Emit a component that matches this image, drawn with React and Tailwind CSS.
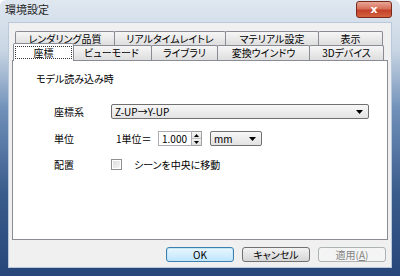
import React from "react";

const topTabs = [
  { label: "レンダリング品質", w: 100 },
  { label: "リアルタイムレイトレ", w: 111 },
  { label: "マテリアル設定", w: 93 },
  { label: "表示", w: 64 },
];

const bottomTabs = [
  { label: "座標", w: 57, selected: true },
  { label: "ビューモード", w: 80 },
  { label: "ライブラリ", w: 66 },
  { label: "変換ウインドウ", w: 92 },
  { label: "3Dデバイス", w: 74 },
];

function Arrow() {
  return (
    <svg width="7" height="4" viewBox="0 0 7 4">
      <path d="M0 0h7L3.5 4z" fill="#000" />
    </svg>
  );
}

function Tab({ label, w, selected, first }) {
  if (selected) {
    return (
      <div
        className="relative z-10 -mt-[2px] -ml-[2px] -mr-[2px] h-[18px] flex bg-white border border-b-0 border-[#898c95] rounded-t-[2px]"
        style={{ width: w + 4 }}
      >
        <span className="flex-1 mx-[1px] mt-[2px] mb-[2px] border border-dotted border-[#333] flex items-center justify-center leading-none">
          {label}
        </span>
      </div>
    );
  }
  return (
    <div
      className={
        first
          ? "h-full flex items-center justify-center border border-b-0 border-[#898c95] bg-gradient-to-b from-[#f6f6f6] to-[#dedede] rounded-t-[2px] leading-none"
          : "h-full -ml-px flex items-center justify-center border border-b-0 border-[#898c95] bg-gradient-to-b from-[#f6f6f6] to-[#dedede] rounded-t-[2px] leading-none"
      }
      style={{ width: w + (first ? 0 : 1) }}
    >
      {label}
    </div>
  );
}

function Select({ value, w }) {
  return (
    <div
      className="h-[15px] flex items-center justify-between pl-[3px] pr-[5px] border border-[#707070] rounded-[2px] bg-gradient-to-b from-[#f7f7f7] to-[#e3e3e3]"
      style={{ width: w }}
    >
      <span className="leading-none">{value}</span>
      <Arrow />
    </div>
  );
}

function Button({ children, primary, disabled }) {
  if (primary) {
    return (
      <div className="w-[68px] h-[15px] flex items-center justify-center rounded-[3px] border border-[#3c7fb1] bg-gradient-to-b from-[#eaf6fd] to-[#bee6fd] shadow-[inset_0_0_0_1px_#c4e5f6] leading-none">
        {children}
      </div>
    );
  }
  if (disabled) {
    return (
      <div className="w-[68px] h-[15px] flex items-center justify-center rounded-[3px] border border-[#adb2b5] bg-[#f4f4f4] text-[#838383] leading-none">
        {children}
      </div>
    );
  }
  return (
    <div className="w-[68px] h-[15px] flex items-center justify-center rounded-[3px] border border-[#707070] bg-gradient-to-b from-[#f2f2f2] to-[#d6d6d6] leading-none">
      {children}
    </div>
  );
}

export default function App() {
  return (
    <div className="w-[400px] h-[276px] flex flex-col rounded-t-[6px] bg-[linear-gradient(180deg,#dfe7f0_0%,#c9d6e4_18%,#6f8fb9_40%,#3a5c8c_70%,#26467a_100%)] font-['Noto_Sans_CJK_JP','Noto_Sans',sans-serif] [font-feature-settings:'palt'] text-[10px] text-black overflow-hidden">
      {/* Title bar */}
      <div className="h-[22px] flex items-start justify-between pl-[5px] pr-[8px] pt-[1px]">
        <span className="mt-[3px] text-[11px] leading-none text-[#1e1e1e]">環境設定</span>
        <div className="w-[36px] h-[17px] flex items-center justify-center rounded-[3px] border border-[#7a2a1d] bg-[linear-gradient(180deg,#e8a796_0%,#d7705a_45%,#c2412a_55%,#d5623f_100%)]">
          <span className="text-white text-[11px] font-bold leading-none [font-family:'DejaVu_Sans',sans-serif]">x</span>
        </div>
      </div>

      {/* Client area */}
      <div className="flex-1 mx-[8px] mb-[8px] flex flex-col bg-[#f0f0f0] border border-[#b9c8da] px-[3px]">
        {/* Tabs */}
        <div className="pt-[8px] pl-[3px]">
          <div className="h-[14px] flex">
            {topTabs.map((t, i) => (
              <Tab key={t.label} label={t.label} w={t.w} first={i === 0} />
            ))}
          </div>
          <div className="h-[15px] flex items-start">
            {bottomTabs.map((t, i) => (
              <Tab key={t.label} label={t.label} w={t.w} selected={t.selected} first={i === 0} />
            ))}
          </div>
        </div>

        {/* Panel */}
        <div className="h-[180px] bg-white border border-[#898c95] pl-[23px] pt-[10px]">
          <div className="h-[14px] flex items-center">モデル読み込み時</div>

          <div className="mt-[19px] pl-[18px] flex flex-col">
            <div className="h-[15px] flex items-center">
              <span className="w-[57px]">座標系</span>
              <Select value="Z-UP→Y-UP" w={258} />
            </div>

            <div className="mt-[12px] h-[15px] flex items-center">
              <span className="w-[62px]">単位</span>
              <span className="w-[42px]">1単位＝</span>
              <div className="w-[34px] h-[15px] flex items-center pl-[3px] border border-[#abadb3] bg-white leading-none">
                1.000
              </div>
              <div className="w-[10px] h-[15px] flex flex-col border border-l-0 border-[#a0a0a0]">
                <div className="flex-1 flex items-center justify-center bg-gradient-to-b from-[#f6f6f6] to-[#e6e6e6] border-b border-[#c0c0c0]">
                  <svg width="5" height="3" viewBox="0 0 5 3">
                    <path d="M2.5 0L5 3H0z" fill="#000" />
                  </svg>
                </div>
                <div className="flex-1 flex items-center justify-center bg-gradient-to-b from-[#f0f0f0] to-[#e0e0e0]">
                  <svg width="5" height="3" viewBox="0 0 5 3">
                    <path d="M0 0h5L2.5 3z" fill="#000" />
                  </svg>
                </div>
              </div>
              <div className="ml-[8px]">
                <Select value="mm" w={52} />
              </div>
            </div>

            <div className="mt-[11px] h-[15px] flex items-center">
              <span className="w-[57px]">配置</span>
              <div className="w-[11px] h-[11px] border border-[#8e8f8f] bg-white p-[1px]">
                <div className="w-full h-full bg-gradient-to-br from-[#dcdcdc] to-[#f6f6f6]" />
              </div>
              <span className="ml-[12px]">シーンを中央に移動</span>
            </div>
          </div>
        </div>

        {/* Buttons */}
        <div className="mt-[7px] pr-[2px] flex justify-end gap-[8px]">
          <Button primary>OK</Button>
          <Button>キャンセル</Button>
          <Button disabled>
            適用(<span className="underline">A</span>)
          </Button>
        </div>
      </div>
    </div>
  );
}
